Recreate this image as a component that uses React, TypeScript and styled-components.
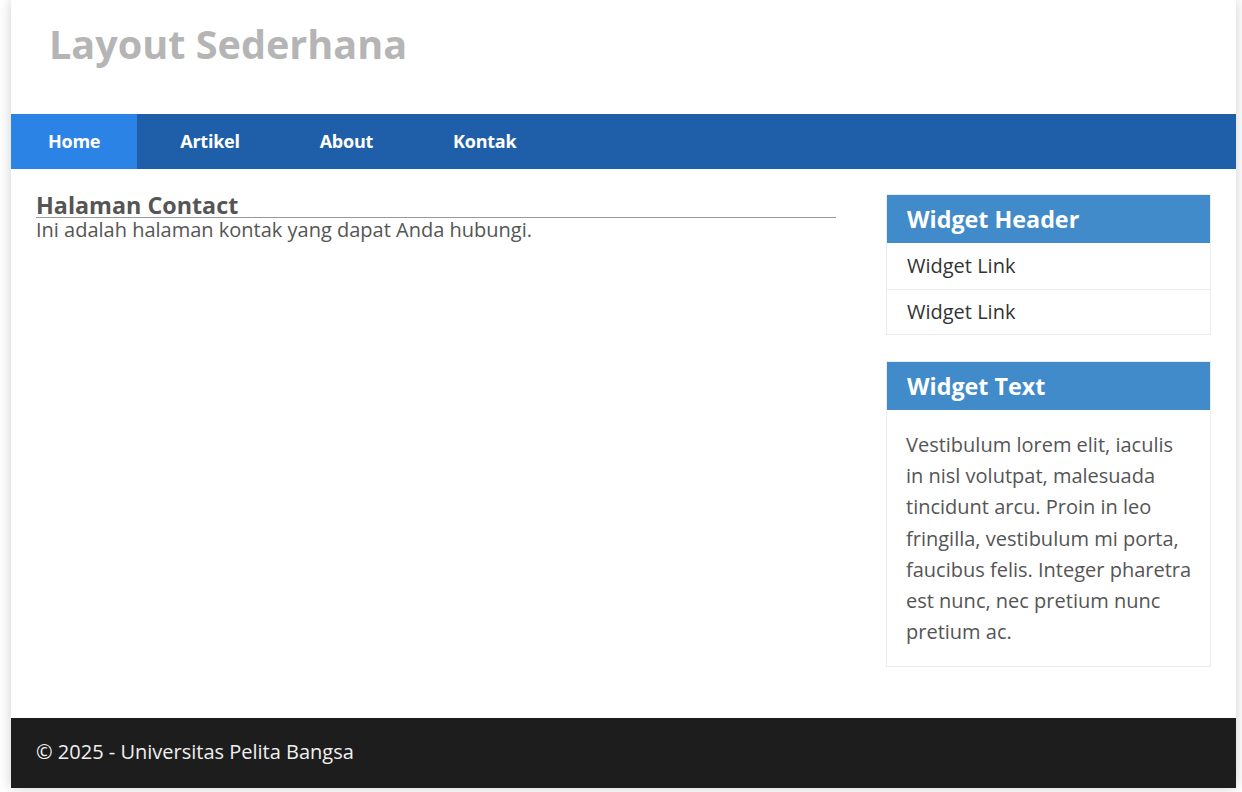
import React from "react";
import styled, { createGlobalStyle } from "styled-components";

const Global = createGlobalStyle`
  html, body { margin: 0; padding: 0; background: #ffffff; }
  body { font-family: "Open Sans", "Noto Sans", sans-serif; color: #555; overflow: hidden; }
  * { box-sizing: border-box; }
`;

const Container = styled.div`
  width: 1225px;
  margin: 0 0 4px 11px;
  background: #fff;
  box-shadow: 0 0 12px #cfcfcf;
`;

const Header = styled.header`
  height: 114px;
  padding: 15px 0 0 38px;
`;

const Title = styled.h1`
  margin: 0;
  font-size: 39.6px;
  font-weight: 700;
  color: #b5b5b5;
  line-height: 58px;
`;

const Nav = styled.nav`
  display: flex;
  gap: 6px;
  height: 55px;
  background: #1f5faa;
`;

const NavItem = styled.a<{ $active?: boolean }>`
  display: flex;
  align-items: center;
  padding: 0 37px 2px 37px;
  background: ${(p) => (p.$active ? "#2b83e5" : "transparent")};
  color: #fff;
  font-weight: 700;
  font-size: 18px;
  text-decoration: none;
  letter-spacing: -0.25px;
`;

const Body = styled.div`
  display: flex;
  justify-content: space-between;
  padding: 25px 25px 51px 25px;
`;

const Main = styled.main`
  width: 800px;
`;

const PageTitle = styled.h2`
  margin: 0;
  font-size: 23.3px;
  font-weight: 700;
  color: #555;
  line-height: 23px;
  border-bottom: 1px solid #999;
`;

const Para = styled.p`
  margin: 0;
  font-size: 20px;
  line-height: 23px;
  color: #555;
`;

const Sidebar = styled.aside`
  width: 325px;
  display: flex;
  flex-direction: column;
  gap: 26px;
`;

const Widget = styled.div`
  border: 1px solid #ececec;
`;

const WidgetHead = styled.h3`
  margin: 0;
  height: 48px;
  display: flex;
  align-items: center;
  padding: 0 20px;
  background: #428bca;
  color: #fff;
  font-size: 23.3px;
  font-weight: 700;
`;

const WidgetLink = styled.a`
  display: flex;
  align-items: center;
  height: 46px;
  padding: 0 20px 2px;
  color: #333;
  font-size: 20px;
  text-decoration: none;
  & + & { height: 45px; border-top: 1px solid #ececec; }
`;

const WidgetText = styled.p`
  margin: 0;
  padding: 19px 16px 19px 19px;
  font-size: 20px;
  line-height: 31.2px;
  color: #555;
`;

const Footer = styled.footer`
  height: 70px;
  display: flex;
  align-items: center;
  padding: 0 25px 3px;
  background: #1d1d1d;
  color: #f0f0f0;
  font-size: 20px;
`;

export default function App() {
  return (
    <>
      <Global />
      <Container>
        <Header>
          <Title>Layout Sederhana</Title>
        </Header>
        <Nav>
          <NavItem $active>Home</NavItem>
          <NavItem>Artikel</NavItem>
          <NavItem>About</NavItem>
          <NavItem>Kontak</NavItem>
        </Nav>
        <Body>
          <Main>
            <PageTitle>Halaman Contact</PageTitle>
            <Para>Ini adalah halaman kontak yang dapat Anda hubungi.</Para>
          </Main>
          <Sidebar>
            <Widget>
              <WidgetHead>Widget Header</WidgetHead>
              <WidgetLink>Widget Link</WidgetLink>
              <WidgetLink>Widget Link</WidgetLink>
            </Widget>
            <Widget>
              <WidgetHead>Widget Text</WidgetHead>
              <WidgetText>
                Vestibulum lorem elit, iaculis in nisl volutpat, malesuada tincidunt arcu. Proin in leo
                fringilla, vestibulum mi porta, faucibus felis. Integer pharetra est nunc, nec pretium nunc
                pretium ac.
              </WidgetText>
            </Widget>
          </Sidebar>
        </Body>
        <Footer>© 2025 - Universitas Pelita Bangsa</Footer>
      </Container>
    </>
  );
}
